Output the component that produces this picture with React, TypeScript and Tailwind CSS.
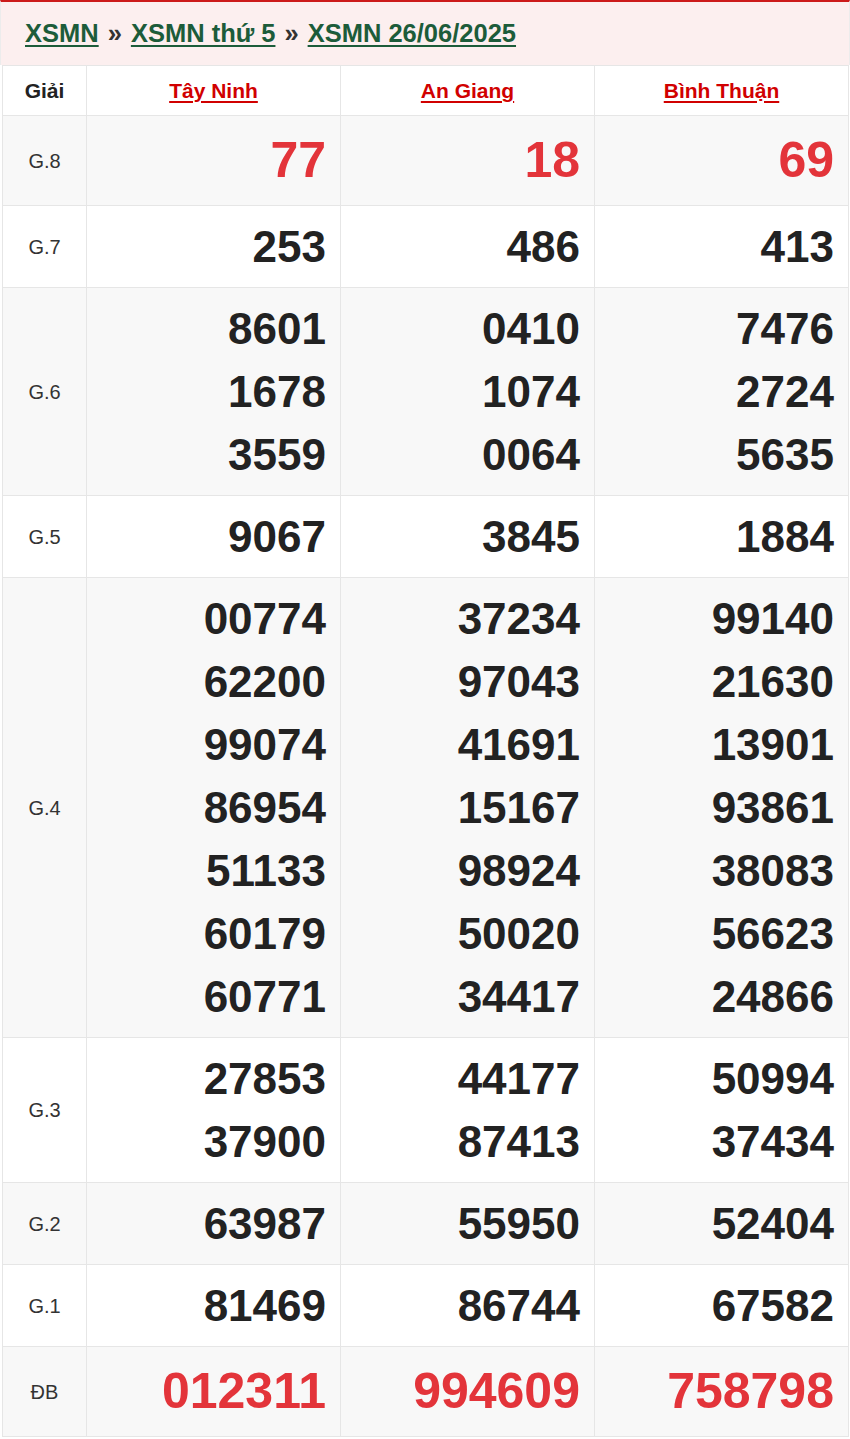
const provinces = ["Tây Ninh", "An Giang", "Bình Thuận"];

type Row = { label: string; red?: boolean; values: string[][] };

const rows: Row[] = [
  { label: "G.8", red: true, values: [["77"], ["18"], ["69"]] },
  { label: "G.7", values: [["253"], ["486"], ["413"]] },
  {
    label: "G.6",
    values: [
      ["8601", "1678", "3559"],
      ["0410", "1074", "0064"],
      ["7476", "2724", "5635"],
    ],
  },
  { label: "G.5", values: [["9067"], ["3845"], ["1884"]] },
  {
    label: "G.4",
    values: [
      ["00774", "62200", "99074", "86954", "51133", "60179", "60771"],
      ["37234", "97043", "41691", "15167", "98924", "50020", "34417"],
      ["99140", "21630", "13901", "93861", "38083", "56623", "24866"],
    ],
  },
  {
    label: "G.3",
    values: [
      ["27853", "37900"],
      ["44177", "87413"],
      ["50994", "37434"],
    ],
  },
  { label: "G.2", values: [["63987"], ["55950"], ["52404"]] },
  { label: "G.1", values: [["81469"], ["86744"], ["67582"]] },
  { label: "ĐB", red: true, values: [["012311"], ["994609"], ["758798"]] },
];

export default function App() {
  return (
    <div className="w-[850px] bg-white font-['Liberation_Sans',Arial,sans-serif]">
      <div className="border-t-2 border-t-[#cc1a1a] border-x border-x-[#ececec] bg-[#fcefef] h-[65px] flex items-center px-[24px]">
        <div className="text-[25.5px] font-bold text-[#333] flex items-center gap-[9px]">
          <a className="text-[#1c5c3a] underline underline-offset-[3px]">XSMN</a>
          <span>»</span>
          <a className="text-[#1c5c3a] underline underline-offset-[3px]">XSMN thứ 5</a>
          <span>»</span>
          <a className="text-[#1c5c3a] underline underline-offset-[3px]">XSMN 26/06/2025</a>
        </div>
      </div>
      <div className="px-[2px]">
        <table className="w-[846px] border-collapse table-fixed">
          <colgroup>
            <col className="w-[84px]" />
            <col className="w-[254px]" />
            <col className="w-[254px]" />
            <col className="w-[254px]" />
          </colgroup>
          <thead>
            <tr className="h-[50px] bg-white">
              <th className="border border-[#e6e6e6] text-[21px] font-bold text-[#222]">Giải</th>
              {provinces.map((p) => (
                <th key={p} className="border border-[#e6e6e6] text-[21px] font-bold">
                  <a className="text-[#d10000] underline underline-offset-[3px]">{p}</a>
                </th>
              ))}
            </tr>
          </thead>
          <tbody>
            {rows.map((r, i) => (
              <tr key={r.label} className={i % 2 === 0 ? "bg-[#f8f8f8]" : "bg-white"}>
                <td className="border border-[#e6e6e6] text-center text-[20px] text-[#333]">{r.label}</td>
                {r.values.map((col, j) => (
                  <td
                    key={j}
                    className={
                      r.red
                        ? "border border-[#e6e6e6] text-right pr-[14px] py-[9px] text-[50px] leading-[71px] font-bold text-[#e3343a]"
                        : "border border-[#e6e6e6] text-right pr-[14px] py-[9px] text-[44px] leading-[63px] font-bold text-[#222]"
                    }
                  >
                    {col.map((n) => (
                      <div key={n}>{n}</div>
                    ))}
                  </td>
                ))}
              </tr>
            ))}
          </tbody>
        </table>
      </div>
    </div>
  );
}
